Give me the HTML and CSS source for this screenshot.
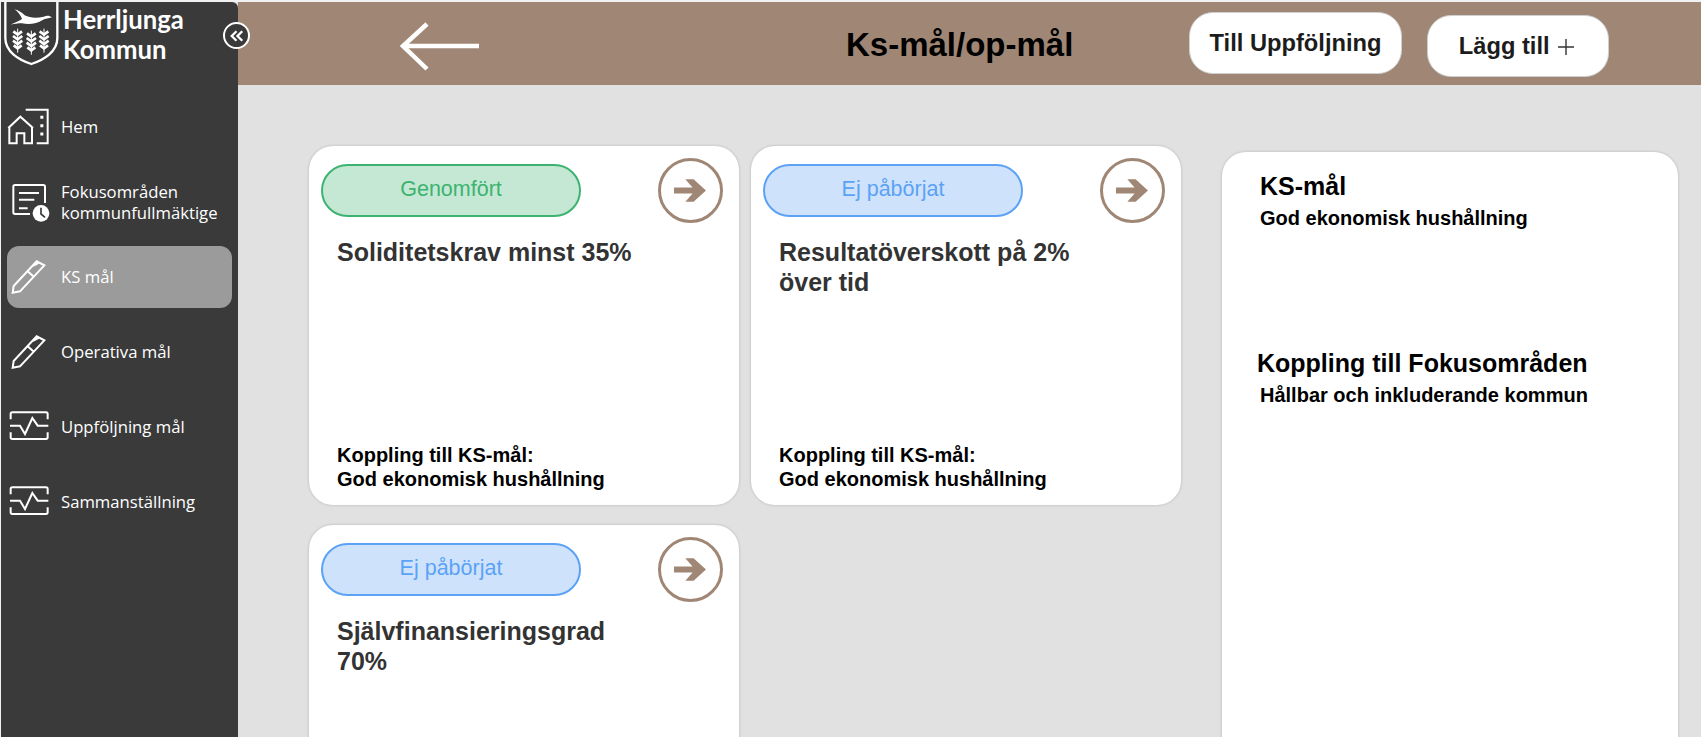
FILE: index.html
```html
<!DOCTYPE html>
<html lang="sv">
<head>
    <meta charset="UTF-8">
    <meta name="viewport" content="width=device-width, initial-scale=1.0">
    <title>Ks-mål/op-mål</title>
    <link rel="stylesheet" href="styles.css">
</head>
<body>
    <div class="app">
        <aside class="sidebar">
            <div class="brand">
                <svg class="brand-logo" viewBox="0 0 186 210">
                    <path d="M10 6V115C10 155 50 180 88 192C126 180 166 155 166 115V6" fill="none" stroke="#fff" stroke-width="7"/>
                    <path d="M38 28C50 32 60 38 68 46C85 55 105 55 125 50C135 46 142 46 150 52C140 55 130 56 122 60C105 72 80 74 60 70C48 70 36 72 26 74C40 66 55 62 60 56C55 45 48 35 38 28Z" fill="#fff"/>
                    <g class="wheat" id="ear">
                        <path class="stalk" d="M47 86V158"/>
                        <path d="M34 94L47 104L60 94M33 108L47 118L61 108M33 122L47 132L61 122M35 136L47 145L59 136"/>
                    </g>
                    <use href="#ear" x="41" y="6"/>
                    <use href="#ear" x="79"/>
                </svg>
                <div class="brand-name">Herrljunga<br>Kommun</div>
                <button class="collapse-btn">
                    <svg viewBox="0 0 24 24" width="24" height="24">
                        <path d="M12 7L7 12L12 17M18 7L13 12L18 17" fill="none" stroke="#fff" stroke-width="2.4"/>
                    </svg>
                </button>
            </div>
            <nav class="nav">
                <a class="nav-item">
                    <svg class="nav-icon" viewBox="0 0 150 135">
                        <path d="M10 72L46 38L84 72M13 70V118H35V88H58V118H81V70M62 17H128V118H95"/>
                        <path d="M106 40H115M106 65H115M106 90H115" stroke-width="9"/>
                    </svg>
                    <span>Hem</span>
                </a>
                <a class="nav-item">
                    <svg class="nav-icon" viewBox="0 0 150 135">
                        <path d="M75 105H30Q25 105 25 100V23Q25 18 30 18H115Q120 18 120 23V72"/>
                        <path d="M42 42H102M42 62H88M42 88H68"/>
                        <circle class="clock" cx="108" cy="103" r="25"/>
                        <path class="clock-hand" d="M108 86V105L120 115"/>
                    </svg>
                    <span>Fokusområden<br>kommunfullmäktige</span>
                </a>
                <a class="nav-item active">
                    <svg class="nav-icon" viewBox="0 0 150 135">
                        <path d="M23 116L26 96L95 22L118 34L45 112ZM68 52L88 70M84 36L102 26"/>
                    </svg>
                    <span>KS mål</span>
                </a>
                <a class="nav-item">
                    <svg class="nav-icon" viewBox="0 0 150 135">
                        <path d="M23 116L26 96L95 22L118 34L45 112ZM68 52L88 70M84 36L102 26"/>
                    </svg>
                    <span>Operativa mål</span>
                </a>
                <a class="nav-item">
                    <svg class="nav-icon" viewBox="0 0 150 135">
                        <path d="M17 46V30Q17 25 22 25H123Q128 25 128 30V46M17 85V100Q17 105 22 105H123Q128 105 128 100V85"/>
                        <path d="M15 65H45L60 90L82 42L98 65H130"/>
                    </svg>
                    <span>Uppföljning mål</span>
                </a>
                <a class="nav-item">
                    <svg class="nav-icon" viewBox="0 0 150 135">
                        <path d="M17 46V30Q17 25 22 25H123Q128 25 128 30V46M17 85V100Q17 105 22 105H123Q128 105 128 100V85"/>
                        <path d="M15 65H45L60 90L82 42L98 65H130"/>
                    </svg>
                    <span>Sammanställning</span>
                </a>
            </nav>
        </aside>

        <main class="main">
            <header class="topbar">
                <svg class="back-arrow" viewBox="0 0 80 50">
                    <path d="M79 24H4M27 2L3 24L27 47" fill="none" stroke="#fff" stroke-width="4.5"/>
                </svg>
                <h1 class="page-title">Ks-mål/op-mål</h1>
                <button class="top-btn follow-btn">Till Uppföljning</button>
                <button class="top-btn add-btn">Lägg till
                    <svg class="plus" viewBox="0 0 18 18" width="18" height="18"><path d="M9 1V17M1 9H17"/></svg>
                </button>
            </header>

            <div class="content">
                <section class="cards">
                    <article class="card">
                        <div class="card-top">
                            <div class="pill done">Genomfört</div>
                            <div class="go-btn">
                                <svg viewBox="0 0 32 24" width="33" height="25"><path d="M0 9H18L11 1H19L31 12L19 23H11L18 15H0Z"/></svg>
                            </div>
                        </div>
                        <h2 class="card-title">Soliditetskrav minst 35%</h2>
                        <p class="card-link">Koppling till KS-mål:<br>God ekonomisk hushållning</p>
                    </article>
                    <article class="card">
                        <div class="card-top">
                            <div class="pill todo">Ej påbörjat</div>
                            <div class="go-btn">
                                <svg viewBox="0 0 32 24" width="33" height="25"><path d="M0 9H18L11 1H19L31 12L19 23H11L18 15H0Z"/></svg>
                            </div>
                        </div>
                        <h2 class="card-title">Resultatöverskott på 2% över tid</h2>
                        <p class="card-link">Koppling till KS-mål:<br>God ekonomisk hushållning</p>
                    </article>
                    <article class="card">
                        <div class="card-top">
                            <div class="pill todo">Ej påbörjat</div>
                            <div class="go-btn">
                                <svg viewBox="0 0 32 24" width="33" height="25"><path d="M0 9H18L11 1H19L31 12L19 23H11L18 15H0Z"/></svg>
                            </div>
                        </div>
                        <h2 class="card-title">Självfinansieringsgrad 70%</h2>
                    </article>
                </section>

                <section class="detail">
                    <h3 class="detail-head">KS-mål</h3>
                    <p class="detail-text">God ekonomisk hushållning</p>
                    <h3 class="detail-head focus-head">Koppling till Fokusområden</h3>
                    <p class="detail-text">Hållbar och inkluderande kommun</p>
                </section>
            </div>
        </main>
    </div>
</body>
</html>
```

FILE: styles.css
```css
* {
    box-sizing: border-box;
}

html, body {
    margin: 0;
    height: 100%;
    overflow: hidden;
}

body {
    background-color: #f1f1f1;
    padding: 2px 0 0 1px;
    font-family: "Liberation Sans", Arial, sans-serif;
}

.app {
    display: flex;
    height: 735px;
    overflow: hidden;
    background-color: #e1e1e1;
}

/* sidebar */
.sidebar {
    width: 237px;
    flex-shrink: 0;
    background-color: #3a3a3a;
    border-top-right-radius: 6px;
    color: #fff;
    position: relative;
    z-index: 1;
}

.brand {
    display: flex;
    height: 94px;
    padding-left: 1px;
    position: relative;
}

.brand-logo {
    width: 62px;
    height: 70px;
    flex-shrink: 0;
    margin-top: -2px;
}

.wheat {
    fill: none;
    stroke: #fff;
    stroke-width: 8;
}

.wheat .stalk {
    stroke-width: 3;
}

.brand-name {
    font-family: Lato, sans-serif;
    font-weight: 700;
    font-size: 25.7px;
    line-height: 30px;
    margin: 2px 0 0 -1px;
}

.collapse-btn {
    position: absolute;
    top: 20px;
    right: -12px;
    width: 27px;
    height: 27px;
    padding: 0;
    display: flex;
    align-items: center;
    justify-content: center;
    background-color: #3a3a3a;
    border: 2px solid #fff;
    border-radius: 50%;
}

.nav {
    display: flex;
    flex-direction: column;
    gap: 13px;
    padding: 0 6px;
}

.nav-item {
    display: flex;
    align-items: center;
    gap: 6px;
    height: 62px;
    padding-bottom: 1px;
    border-radius: 12px;
    font-family: "Open Sans", sans-serif;
    font-size: 16.7px;
    line-height: 21px;
    color: #fff;
}

.nav-item.active {
    background-color: #9b9b9b;
}

.nav-icon {
    width: 50px;
    height: 45px;
    flex-shrink: 0;
    margin-left: -2px;
    fill: none;
    stroke: #fff;
    stroke-width: 6;
}

.clock {
    fill: #fff;
    stroke: none;
}

.clock-hand {
    stroke: #3a3a3a;
    stroke-width: 5;
}

/* main area */
.main {
    flex: 1;
    min-width: 0;
}

.topbar {
    display: flex;
    align-items: flex-start;
    height: 83px;
    background-color: #a08775;
}

.back-arrow {
    width: 80px;
    height: 50px;
    margin: 20px 0 0 162px;
}

.page-title {
    width: 228px;
    margin: 24px 0 0 366px;
    font-size: 33px;
    line-height: 38px;
    color: #000;
    white-space: nowrap;
}

.top-btn {
    height: 62px;
    background-color: #fff;
    border: 1px solid #cfcfcf;
    border-radius: 24px;
    font-family: "Liberation Sans", Arial, sans-serif;
    font-weight: 700;
    font-size: 23.7px;
    color: #1c1c1c;
}

.follow-btn {
    width: 213px;
    margin: 10px 0 0 115px;
}

.add-btn {
    width: 182px;
    margin: 13px 0 0 25px;
    padding-right: 8px;
}

.plus {
    fill: none;
    stroke: #333;
    stroke-width: 1.4;
    vertical-align: -2px;
    margin-left: 1px;
}

.content {
    display: flex;
    align-items: flex-start;
    padding: 61px 0 0 71px;
}

.cards {
    display: grid;
    grid-template-columns: 430px 430px;
    gap: 20px 12px;
    width: 872px;
    flex-shrink: 0;
}

.card {
    display: flex;
    flex-direction: column;
    height: 359px;
    padding: 12px 16px 14px 12px;
    background-color: #fff;
    border-radius: 24px;
    box-shadow: 0 0 3px rgba(0, 0, 0, 0.2);
}

.card-top {
    display: flex;
    align-items: center;
    justify-content: space-between;
}

.pill {
    width: 260px;
    height: 53px;
    line-height: 46px;
    text-align: center;
    border: 2px solid;
    border-radius: 27px;
    font-size: 21.5px;
}

.pill.done {
    background-color: #c5e8d4;
    border-color: #3cb371;
    color: #3cb371;
}

.pill.todo {
    background-color: #cfe2fc;
    border-color: #5ba2f5;
    color: #5ba2f5;
}

.go-btn {
    width: 65px;
    height: 65px;
    display: flex;
    align-items: center;
    justify-content: center;
    border: 3px solid #a08775;
    border-radius: 50%;
    fill: #a08775;
}

.card-title {
    width: 300px;
    margin: 14px 0 0 16px;
    font-size: 25px;
    line-height: 30px;
    color: #333;
}

.card-link {
    margin: auto 0 0 16px;
    font-size: 20px;
    font-weight: 700;
    line-height: 24px;
    color: #000;
}

.detail {
    width: 456px;
    height: 640px;
    flex-shrink: 0;
    margin: 6px 0 0 41px;
    padding: 19px 0 0 38px;
    background-color: #fff;
    border-radius: 24px;
    box-shadow: 0 0 3px rgba(0, 0, 0, 0.2);
    color: #000;
}

.detail-head {
    margin: 0;
    font-size: 25px;
    line-height: 30px;
}

.detail-text {
    margin: 5px 0 0;
    font-size: 20px;
    font-weight: 700;
    line-height: 24px;
}

.focus-head {
    margin: 118px 0 0 -3px;
}
```
